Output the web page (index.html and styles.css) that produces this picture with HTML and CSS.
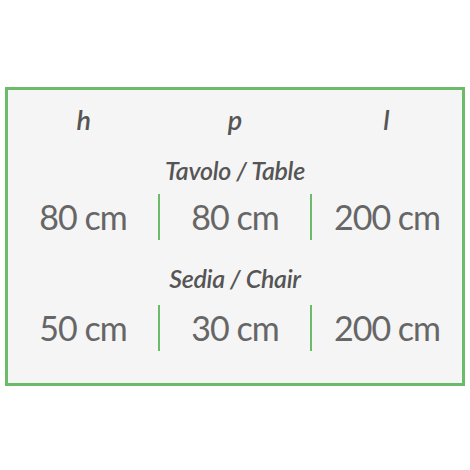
FILE: index.html
```html
<!DOCTYPE html>
<html>
<head>
<meta charset="utf-8">
<link rel="stylesheet" href="styles.css">
</head>
<body>
<div class="page">
  <div class="box">
    <div class="row heads">
      <div class="cell">h</div>
      <div class="cell">p</div>
      <div class="cell">l</div>
    </div>
    <div class="title">Tavolo / Table</div>
    <div class="row vals v1">
      <div class="cell">80 cm</div>
      <div class="sep"></div>
      <div class="cell">80 cm</div>
      <div class="sep"></div>
      <div class="cell">200 cm</div>
    </div>
    <div class="title t2">Sedia / Chair</div>
    <div class="row vals v2">
      <div class="cell">50 cm</div>
      <div class="sep"></div>
      <div class="cell">30 cm</div>
      <div class="sep"></div>
      <div class="cell">200 cm</div>
    </div>
  </div>
</div>
</body>
</html>
```
FILE: styles.css
```css
html, body { margin: 0; padding: 0; background: #ffffff; }
.page { width: 470px; height: 470px; padding-top: 87px; padding-left: 5px; box-sizing: border-box; }
.box {
  width: 460px; height: 299px; box-sizing: border-box;
  border: 3px solid #6cbb6a; background: #f5f5f5;
  font-family: "Lato", sans-serif; color: #666;
  padding-top: 14px;
}
.row { display: flex; align-items: center; }
.cell { flex: 1; text-align: center; }
.heads .cell { font-style: italic; font-weight: 600; font-size: 27px; color: #555; line-height: 32px; }
.title { text-align: center; font-style: italic; font-weight: 600; font-size: 25px; color: #555; line-height: 32px; margin-top: 18px; letter-spacing: -0.3px; }
.t2 { margin-top: 21px; }
.vals { height: 48px; }
.v1 { margin-top: 7px; }
.v2 { margin-top: 10px; }
.vals .cell { font-size: 34px; letter-spacing: -1px; line-height: 48px; }
.sep { width: 2px; height: 46px; background: #6cbb6a; }
```
